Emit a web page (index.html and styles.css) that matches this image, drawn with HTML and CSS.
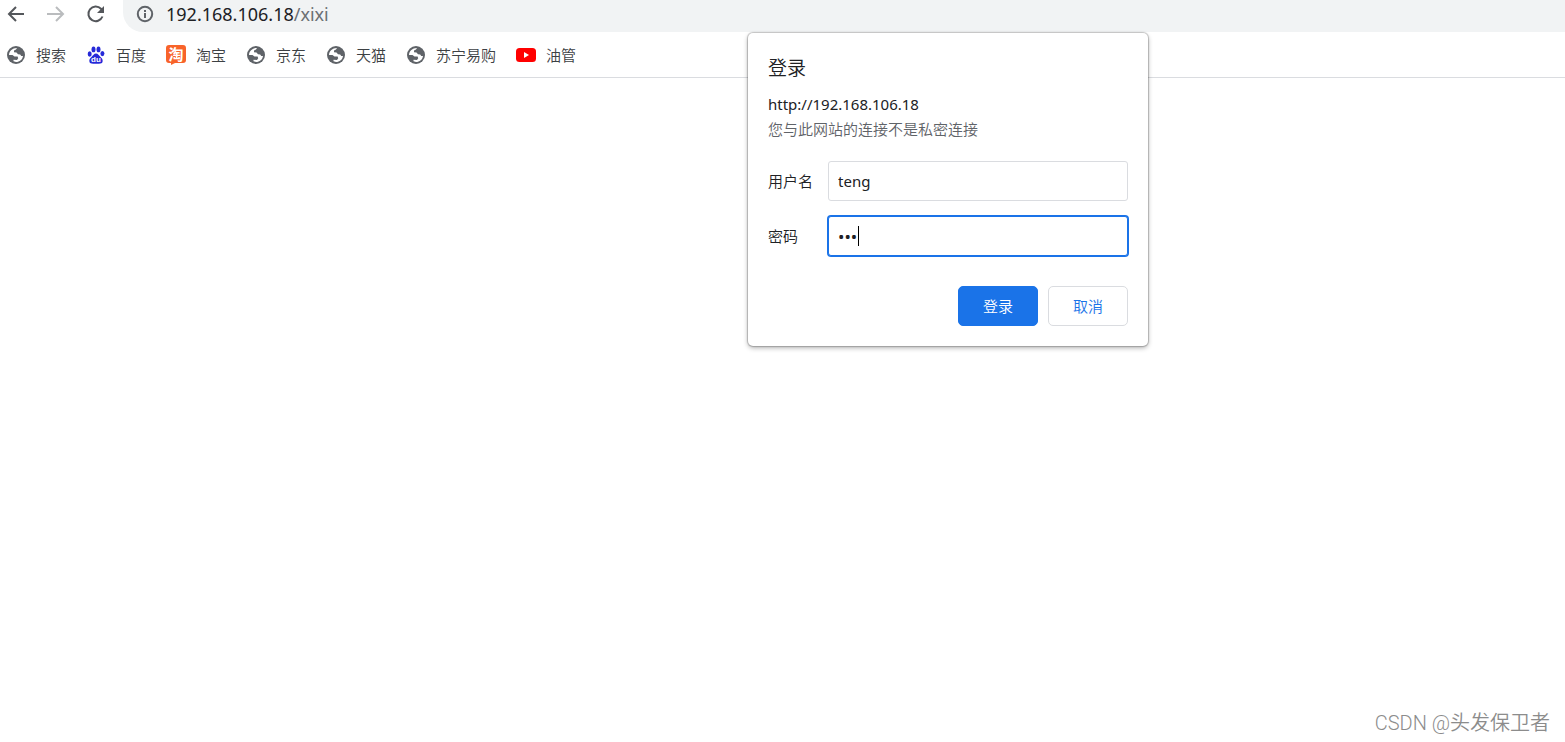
FILE: index.html
```html
<!DOCTYPE html>
<html lang="zh-CN">
<head>
<meta charset="utf-8">
<meta name="viewport" content="width=device-width, initial-scale=1">
<title>192.168.106.18/xixi</title>
<link rel="stylesheet" href="styles.css">
</head>
<body>
<svg class="defs" aria-hidden="true">
  <symbol id="globe" viewBox="0 0 18 18">
    <circle cx="9" cy="9" r="9" fill="#5f6368"/>
    <path d="M10 2L9 3.500L7 4.600V6.200L9.500 6.500L11 8.200L13.200 8.400L14.200 10L16 10C15.500 13.500 12.800 16 9 16L6.500 15.200V13.800L10 14L11.200 12.200L10.600 10.600H7.500L5.500 9H2C2.200 5 5.600 1.900 10 2Z" fill="#fff"/>
  </symbol>
</svg>
<header class="browser">
  <div class="toolbar">
    <button class="nav" type="button" aria-label="后退"><svg viewBox="0 0 20 20"><path d="M19 10H4M11 3L4 10L11 17"/></svg></button>
    <button class="nav nav-off" type="button" aria-label="前进" disabled><svg viewBox="0 0 20 20"><path d="M2 10H18M11 3L18 10L11 17"/></svg></button>
    <button class="nav" type="button" aria-label="重新加载"><svg viewBox="0 0 20 20"><path d="M17.500 12.500A7.300 7.300 0 1 1 16 4.800L18 7"/><path class="solid" d="M19 2V9H12Z"/></svg></button>
    <div class="address">
      <svg class="info" viewBox="0 0 18 18"><circle cx="9" cy="9" r="7.200"/><path d="M9 8V13M9 5V7"/></svg>
      <span class="url">192.168.106.18<span class="path">/xixi</span></span>
    </div>
  </div>
  <nav class="bookmarks">
    <a href="#"><svg class="icon"><use href="#globe"/></svg>搜索</a>
    <a href="#"><svg class="icon" viewBox="0 0 18 18" fill="#2529d8"><ellipse cx="2.700" cy="8" rx="2" ry="2.700"/><ellipse cx="6.500" cy="3.400" rx="2" ry="2.900"/><ellipse cx="11.500" cy="3.400" rx="2" ry="2.900"/><ellipse cx="15.400" cy="7.600" rx="2" ry="2.600"/><path d="M9 7.500C11 7.500 12 9.500 13.500 11C15 12.400 16 13.500 15.600 15.600C15.200 18.300 12.500 17.700 9 17.700S2.800 18.300 2.400 15.600C2 13.500 3 12.400 4.500 11C6 9.500 7 7.500 9 7.500Z"/><text class="du" x="9" y="16">du</text></svg>百度</a>
    <a href="#"><svg class="icon icon-wide" viewBox="0 0 20 20"><path d="M3 0H17Q20 0 20 3V15Q20 18 17 18H9L5 20L5 18H3Q0 18 0 15V3Q0 0 3 0Z" fill="#f8632a"/><text class="tao" x="10" y="15">淘</text></svg>淘宝</a>
    <a href="#"><svg class="icon"><use href="#globe"/></svg>京东</a>
    <a href="#"><svg class="icon"><use href="#globe"/></svg>天猫</a>
    <a href="#"><svg class="icon"><use href="#globe"/></svg>苏宁易购</a>
    <a href="#"><svg class="icon icon-wide" viewBox="0 0 20 20"><rect y="3" width="20" height="14" rx="3.500" fill="#f00"/><path d="M8 7V13L13 10Z" fill="#fff"/></svg>油管</a>
  </nav>
</header>
<form class="dialog" role="dialog" aria-labelledby="title">
  <h1 id="title">登录</h1>
  <p class="origin">http://192.168.106.18</p>
  <p class="note">您与此网站的连接不是私密连接</p>
  <div class="fields">
    <label for="user">用户名</label>
    <input id="user" type="text" value="teng">
    <label for="pass">密码</label>
    <div class="field">
      <input id="pass" class="active" type="password" value="123">
      <span class="caret"></span>
    </div>
  </div>
  <div class="actions">
    <button class="primary" type="submit">登录</button>
    <button type="button">取消</button>
  </div>
</form>
<footer class="watermark">CSDN @头发保卫者</footer>
</body>
</html>
```
FILE: styles.css
```css
* { box-sizing: border-box; }
body {
  margin: 0;
  min-height: 100vh;
  display: flex;
  flex-direction: column;
  background: #fff;
  color: #202124;
  font: 15px/20px "Noto Sans", "Noto Sans CJK SC DemiLight", "Noto Sans CJK SC Light", "Noto Sans CJK SC", sans-serif;
}
.defs { position: absolute; width: 0; height: 0; }
.browser { border-bottom: 1px solid #dadce0; }
.toolbar { display: flex; padding-left: 5px; height: 32px; }
.nav {
  width: 20px;
  height: 28px;
  margin-right: 20px;
  padding: 0;
  border: 0;
  background: none;
  color: #54575b;
}
.nav svg { display: block; width: 20px; height: 20px; fill: none; stroke: currentColor; stroke-width: 2; }
.nav .solid { fill: currentColor; stroke: none; }
.nav-off { color: #babcbe; }
.address {
  flex: 1;
  display: flex;
  align-items: center;
  gap: 12px;
  margin-left: -2px;
  padding: 0 0 4px 13px;
  background: #f1f3f4;
  border-radius: 0 0 0 20px;
}
.info { width: 18px; height: 18px; fill: none; stroke: #5f6368; stroke-width: 2; }
.url { font-size: 18px; line-height: 24px; }
.path { color: #6b6f73; }
.bookmarks { display: flex; gap: 20px; padding: 12px 6px 11px; }
.bookmarks a { display: flex; align-items: center; gap: 10px; height: 22px; color: #3c4043; text-decoration: none; }
.icon { width: 20px; height: 18px; overflow: visible; }
.icon-wide { height: 20px; }
.du { font: bold 8px "Liberation Sans", sans-serif; fill: #fff; text-anchor: middle; }
.tao { font: bold 15px "Noto Sans CJK SC", sans-serif; fill: #fff; text-anchor: middle; }
.dialog {
  position: absolute;
  top: 33px;
  right: 417px;
  width: 400px;
  padding: 23px 20px 20px;
  background: #fff;
  border-radius: 5px;
  box-shadow: 0 0 1px 1px rgba(0, 0, 0, .2), 0 2px 5px rgba(0, 0, 0, .3);
}
h1 { margin: 0 0 12px; font-size: 19px; line-height: 24px; font-weight: 400; }
p { margin: 0; line-height: 25px; }
.note { color: #5f6368; }
.fields { display: grid; grid-template-columns: 45px 1fr; gap: 15px; align-items: center; margin-top: 19px; }
.field { position: relative; }
.dialog input {
  display: block;
  width: 100%;
  height: 40px;
  padding: 0 9px;
  border: 1px solid #dadce0;
  border-radius: 3px;
  background: #fff;
  color: #202124;
  font: inherit;
  outline: 0;
}
.dialog input.active { border-color: #1a73e8; box-shadow: 0 0 0 1px #1a73e8; font-size: 17px; }
.caret { position: absolute; left: 30px; top: 10px; width: 1px; height: 20px; background: #000; }
.actions { display: flex; justify-content: flex-end; gap: 10px; margin-top: 30px; }
.actions button {
  width: 80px;
  height: 40px;
  padding: 0;
  border: 1px solid #dadce0;
  border-radius: 5px;
  background: #fff;
  color: #1a73e8;
  font: inherit;
}
.actions .primary { border-color: #1a73e8; background: #1a73e8; color: #fff; }
.watermark {
  margin-top: auto;
  padding: 0 15px 5px;
  text-align: right;
  color: #8c8c8c;
  font: 300 20px/28px Roboto, "Noto Sans CJK SC DemiLight", "Noto Sans CJK SC Light", "Noto Sans CJK SC", sans-serif;
}
```
